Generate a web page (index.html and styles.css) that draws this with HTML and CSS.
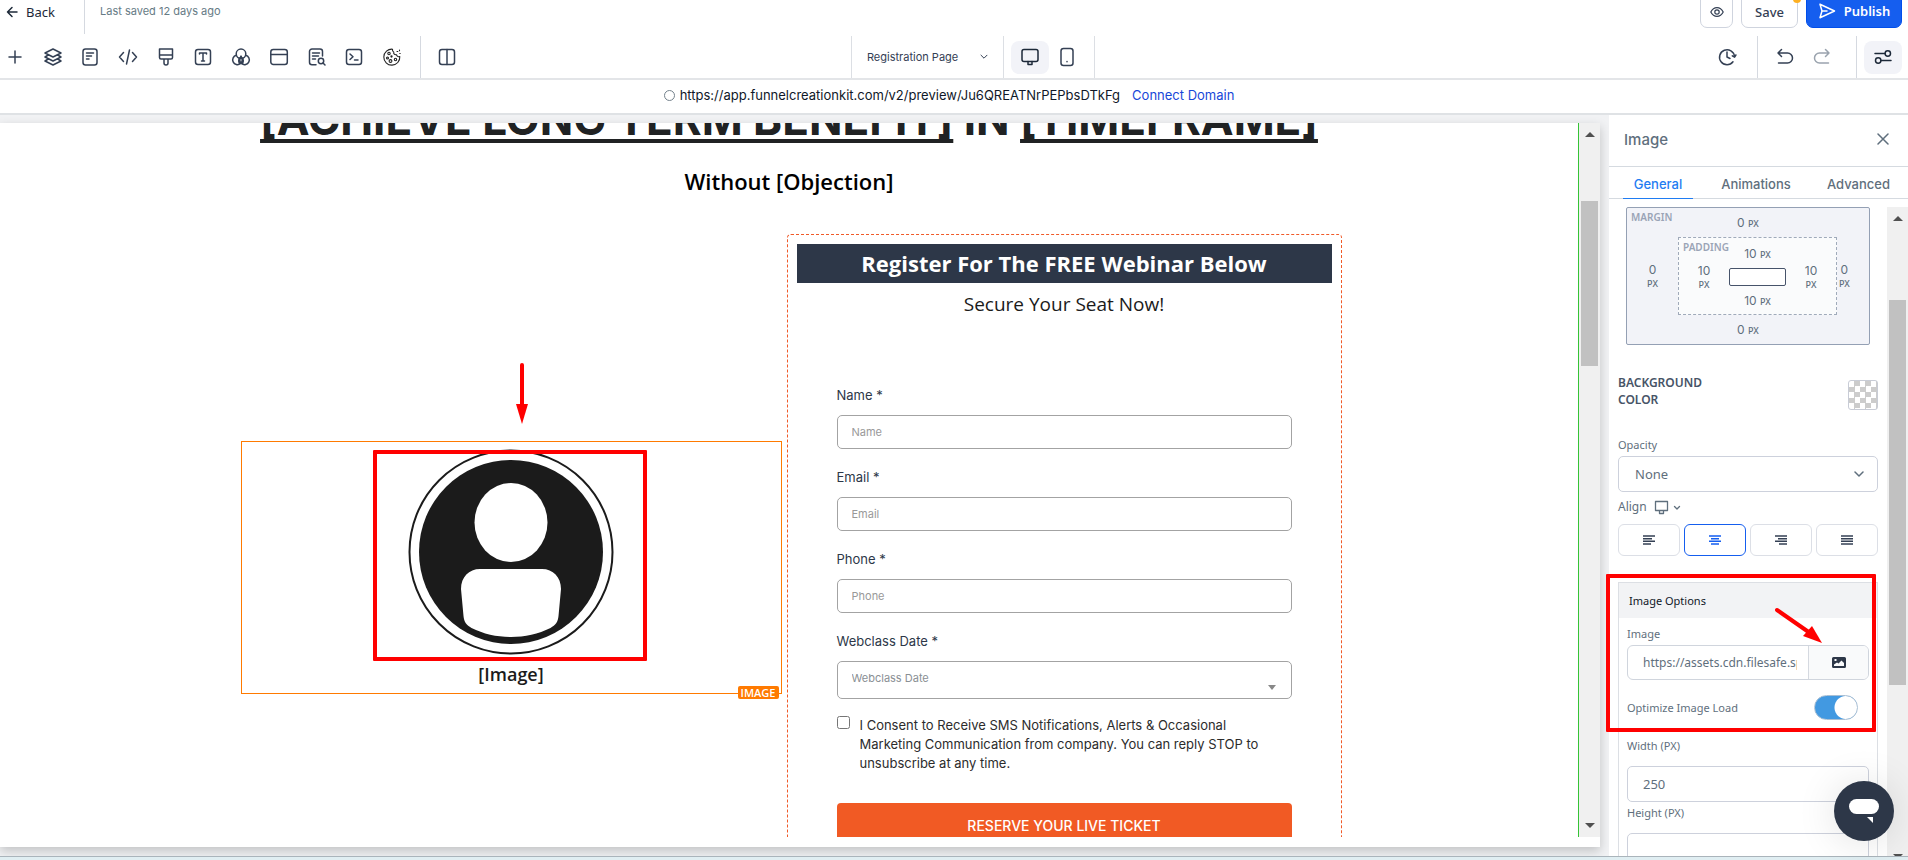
FILE: index.html
```html
<!DOCTYPE html>
<html lang="en">
<head>
<meta charset="utf-8">
<title>Page Builder</title>
<link rel="stylesheet" href="styles.css">
</head>
<body>
<header class="topbar">
  <a class="back" href="#"><svg width="12" height="12" viewBox="0 0 12 12"><path d="M11 6H1.5M6 1.5 1.5 6 6 10.5"/></svg>Back</a>
  <span class="saved">Last saved 12 days ago</span>
  <div class="top-actions">
    <button class="btn eye" aria-label="Preview"><svg width="14" height="14" viewBox="0 0 14 14"><path d="M.8 7C2.200 4.200 4.400 2.600 7 2.600S11.800 4.200 13.200 7C11.800 9.800 9.600 11.400 7 11.400S2.200 9.800.8 7Z"/><circle cx="7" cy="7" r="2.200"/></svg></button>
    <button class="btn save">Save<i class="dot"></i></button>
    <button class="btn publish"><svg width="18" height="18" viewBox="0 0 18 18"><path d="M2 2.200 16.500 9 2 15.800 4 9ZM4 9h5"/></svg>Publish</button>
  </div>
</header>

<nav class="toolbar">
  <div class="left">
  <div class="tools">
    <button class="tool" aria-label="Add"><svg viewBox="0 0 20 20"><path d="M10 4v12M4 10h12"/></svg></button>
    <button class="tool" aria-label="Layers"><svg viewBox="0 0 20 20"><path d="M10 2 18 6l-8 4-8-4ZM4.500 8.500 2 10l8 4 8-4-2.500-1.500M4.500 12.500 2 14l8 4 8-4-2.500-1.500"/></svg></button>
    <button class="tool" aria-label="Pages"><svg viewBox="0 0 20 20"><rect x="3" y="2" width="14" height="16" rx="2.500"/><path d="M6.500 6h7M6.500 9h5M6.500 12h2.500"/></svg></button>
    <button class="tool" aria-label="Code"><svg viewBox="0 0 20 20"><path d="M5.500 5.500 1.500 10l4 4.500M14.500 5.500l4 4.500-4 4.500M11.500 3l-3 14"/></svg></button>
    <button class="tool" aria-label="Styles"><svg viewBox="0 0 20 20"><path d="M3.500 2h13v8.500a1.500 1.500 0 0 1-1.500 1.500H5a1.500 1.500 0 0 1-1.500-1.500ZM3.500 8h13M8 12v4a2 2 0 0 0 4 0v-4"/></svg></button>
    <button class="tool" aria-label="Typography"><svg viewBox="0 0 20 20"><rect x="2.500" y="2.500" width="15" height="15" rx="2.500"/><path d="M6.500 7V6h7v1M10 6v8M8.500 14h3"/></svg></button>
    <button class="tool" aria-label="Colors"><svg viewBox="0 0 20 20"><circle cx="10" cy="6.800" r="4.800"/><path d="M9.700 9.300A4.800 4.800 0 1 1 5.300 8.200M14.700 8.200a4.800 4.800 0 1 1-4.400 1.100M8.800 17a4.800 4.800 0 0 1 1.200-7.200 4.800 4.800 0 0 1 1.200 7.200"/></svg></button>
    <button class="tool" aria-label="Popup"><svg viewBox="0 0 20 20"><rect x="1.800" y="2.500" width="16.500" height="15" rx="2.500"/><path d="M2 7.500h16"/></svg></button>
    <button class="tool" aria-label="SEO"><svg viewBox="0 0 20 20"><path d="M9 17.800H5A2.500 2.500 0 0 1 2.500 15.300V4.500A2.500 2.500 0 0 1 5 2h8a2.500 2.500 0 0 1 2.500 2.500V9M5.500 6h7M5.500 9h6M5.500 12h3"/><circle cx="14" cy="14" r="2.700"/><path d="m16 16 2 2"/></svg></button>
    <button class="tool" aria-label="Tracking"><svg viewBox="0 0 20 20"><rect x="2.500" y="2.500" width="15" height="15" rx="2.500"/><path d="m6 7 3 2.800L6 12.500M10.500 13H14"/></svg></button>
    <button class="tool cookie" aria-label="Cookies"><svg viewBox="0 0 20 20"><path d="M10.500 2.200a8 8 0 1 0 7.300 7.300c-1.800.6-3-.3-3.300-1.800-2 .3-3.200-.8-2.700-2.500-1-.5-1.500-1.500-1.300-3Z"/><circle cx="7" cy="6.500" r="1.200"/><circle cx="5.500" cy="11" r="1"/><circle cx="8.500" cy="14" r="1.400"/><circle cx="13.500" cy="12.500" r="1.200"/><circle cx="9.500" cy="9.500" r=".6"/><path d="M15 4.500h.8M17.500 3v.8M17.800 6.500h.4"/></svg></button>
  </div>
  <div class="split"><button class="tool" aria-label="Columns"><svg viewBox="0 0 20 20"><rect x="2.500" y="2.500" width="15" height="15" rx="2.500"/><path d="M10 2.500v15"/></svg></button></div>
  </div>
  <button class="page-pick">Registration Page <svg width="8" height="6" viewBox="0 0 8 6"><path d="m1 1.200 3 3 3-3"/></svg></button>
  <div class="devices">
    <button class="chip" aria-label="Desktop"><svg width="20" height="20" viewBox="0 0 20 20"><rect x="2" y="2.500" width="16" height="12" rx="2"/><path d="M8 14.500v3h4v-3"/></svg></button>
    <button class="tool" aria-label="Mobile"><svg viewBox="0 0 20 20"><rect x="4" y="1.500" width="12" height="17" rx="2.500"/><path d="M10 14.500v.3"/></svg></button>
  </div>
  <div class="hist">
    <button class="tool" aria-label="History"><svg viewBox="0 0 20 20"><path d="M16 14.800A7.500 7.500 0 1 1 17.500 9.500M15.300 8.800l2.300 1.400 1.300-2.200M10 5v5l3 1.500"/></svg></button>
  </div>
  <div class="undo">
    <button class="tool" aria-label="Undo"><svg viewBox="0 0 20 20"><path d="M6.500 2.500 3 6l3.500 3.500M3 6h9.500a4.500 4.500 0 0 1 0 10H3.500"/></svg></button>
    <button class="tool off" aria-label="Redo"><svg viewBox="0 0 20 20"><path d="M13.500 2.500 17 6l-3.500 3.500M17 6H7.500a4.500 4.500 0 0 0 0 10h9"/></svg></button>
  </div>
  <div class="prefs"><button class="chip" aria-label="Settings"><svg width="20" height="20" viewBox="0 0 20 20"><path d="M2 6.500h10M8 13.500h10"/><circle cx="14.800" cy="6.500" r="2.700"/><circle cx="5.200" cy="13.500" r="2.700"/></svg></button></div>
</nav>

<div class="urlbar"><span class="ring"></span><span>https://app.funnelcreationkit.com/v2/preview/Ju6QREATNrPEPbsDTkFg</span><a href="#">Connect Domain</a></div>

<div class="work">
  <section class="stage">
    <main class="canvas">
      <div class="view">
        <h1><u>[ACHIEVE LONG TERM BENEFIT]</u> IN <u>[TIMEFRAME]</u></h1>
        <h2>Without [Objection]</h2>
        <div class="row">
          <figure class="picture">
            <svg class="avatar" width="206" height="206" viewBox="0 0 206 206">
              <circle cx="103" cy="103" r="101.500" fill="#fff" stroke="#1b1b1b" stroke-width="2"/>
              <circle cx="103" cy="103" r="92" fill="#1b1b1b"/>
              <ellipse cx="103" cy="73.500" rx="36.500" ry="39.500" fill="#fff"/>
              <path d="M72 120h62c11 0 19 8 19 20l-2.500 27c-.5 6-3 9-8 12-24 12-55 12-79 0-5-3-7.500-6-8-12L53 140c0-12 8-20 19-20Z" fill="#fff"/>
            </svg>
            <figcaption>[Image]</figcaption>
            <span class="tag">IMAGE</span>
            <span class="mark mark-picture"></span>
            <svg class="arrow-down" width="12" height="62" viewBox="0 0 12 62"><path d="M6 2v42" stroke="#f00" stroke-width="4" stroke-linecap="round"/><path d="M0 41h12L6 61Z" fill="#f00"/></svg>
          </figure>
          <form class="optin">
            <h3>Register For The FREE Webinar Below</h3>
            <p class="sub">Secure Your Seat Now!</p>
            <div class="fields">
              <label for="f-name">Name *</label><input id="f-name" type="text" placeholder="Name">
              <label for="f-email">Email *</label><input id="f-email" type="email" placeholder="Email">
              <label for="f-phone">Phone *</label><input id="f-phone" type="tel" placeholder="Phone">
              <label for="f-date">Webclass Date *</label>
              <div class="pick"><select id="f-date"><option>Webclass Date</option></select><svg width="8" height="5" viewBox="0 0 8 5"><path d="M0 0h8L4 5Z"/></svg></div>
              <div class="consent"><input id="f-ok" type="checkbox"><label for="f-ok">I Consent to Receive SMS Notifications, Alerts &amp; Occasional Marketing Communication from company. You can reply STOP to unsubscribe at any time.</label></div>
              <button class="reserve" type="button">RESERVE YOUR LIVE TICKET</button>
            </div>
          </form>
        </div>
      </div>
      <div class="scroll"><svg width="10" height="5" viewBox="0 0 10 5"><path d="M0 5h10L5 0Z"/></svg><i class="thumb"></i><svg class="end" width="10" height="5" viewBox="0 0 10 5"><path d="M0 0h10L5 5Z"/></svg></div>
    </main>
  </section>

  <aside class="panel">
    <div class="panel-head"><h4>Image</h4><button aria-label="Close"><svg width="12" height="12" viewBox="0 0 12 12"><path d="m1 1 10 10M11 1 1 11"/></svg></button></div>
    <div class="tabs"><button class="on">General</button><button>Animations</button><button>Advanced</button></div>
    <div class="panel-body">
      <div class="props">
        <div class="margin-box">
          <b class="corner">MARGIN</b>
          <span class="val top">0 <small>PX</small></span>
          <span class="val side">0<small>PX</small></span>
          <div class="padding-box">
            <b class="corner">PADDING</b>
            <span class="val top">10 <small>PX</small></span>
            <span class="val side">10<small>PX</small></span>
            <i class="core"></i>
            <span class="val side">10<small>PX</small></span>
            <span class="val bottom">10 <small>PX</small></span>
          </div>
          <span class="val side near">0<small>PX</small></span>
          <span class="val bottom">0 <small>PX</small></span>
        </div>
        <div class="bg-row"><span>BACKGROUND<br>COLOR</span><button class="swatch" aria-label="Background color"></button></div>
        <label class="lab" for="p-op">Opacity</label>
        <div class="pick-op"><select id="p-op"><option>None</option></select><svg width="10" height="6" viewBox="0 0 10 6"><path d="m1 1 4 4 4-4"/></svg></div>
        <div class="align-label">Align <svg width="28" height="15" viewBox="0 0 28 15"><path d="M1.500 1.500h12v9h-12ZM5.500 11v2.500h4V11M20.500 6.500l2.500 2.500 2.500-2.500"/></svg></div>
        <div class="aligns">
          <button aria-label="Left"><svg width="12" height="10" viewBox="0 0 12 10"><path d="M0 1h12M0 3.700h9M0 6.300h12M0 9h8"/></svg></button>
          <button class="on" aria-label="Center"><svg width="12" height="10" viewBox="0 0 12 10"><path d="M0 1h12M2 3.700h8M0 6.300h12M2 9h8"/></svg></button>
          <button aria-label="Right"><svg width="12" height="10" viewBox="0 0 12 10"><path d="M0 1h12M3 3.700h9M0 6.300h12M4 9h8"/></svg></button>
          <button aria-label="Justify"><svg width="12" height="10" viewBox="0 0 12 10"><path d="M0 1h12M0 3.700h12M0 6.300h12M0 9h12"/></svg></button>
        </div>
        <div class="card">
          <h5>Image Options</h5>
          <div class="card-body">
            <label for="p-url">Image</label>
            <div class="url-field"><input id="p-url" type="text" value="https://assets.cdn.filesafe.space/image.png"><button aria-label="Choose image"><svg width="14" height="11" viewBox="0 0 14 11"><path fill-rule="evenodd" d="M1.500 0h11A1.500 1.500 0 0 1 14 1.500v8a1.500 1.500 0 0 1-1.500 1.500h-11A1.500 1.500 0 0 1 0 9.500v-8A1.500 1.500 0 0 1 1.500 0ZM2.500 2v2h2V2ZM2 9h10V6L9.500 3.500 6.500 6.500 5 5.500 2 7.500Z"/></svg></button></div>
            <div class="optimize"><label for="p-opt">Optimize Image Load</label><input id="p-opt" class="switch" type="checkbox" checked></div>
            <label class="lw" for="p-w">Width (PX)</label><input class="num" id="p-w" type="text" value="250">
            <label class="lh" for="p-h">Height (PX)</label><input class="num" id="p-h" type="text">
          </div>
        </div>
      </div>
      <div class="scroll side-scroll"><svg width="10" height="5" viewBox="0 0 10 5"><path d="M0 5h10L5 0Z"/></svg><i class="thumb"></i><svg class="end" width="10" height="2" viewBox="0 0 10 2"><path d="M0 0h10L8 2H2Z"/></svg></div>
    </div>
    <span class="mark mark-options"></span>
    <svg class="arrow-pick" width="50" height="38" viewBox="0 0 50 38"><path d="M3 3 36 26" stroke="#f00" stroke-width="4" stroke-linecap="round"/><path d="m29 29 9-10 10 17Z" fill="#f00"/></svg>
    <button class="chat" aria-label="Chat"><svg width="32" height="26" viewBox="0 0 32 26"><rect x="1" y="1" width="30" height="15" rx="7.500"/><path d="M19 19h6v6Z"/></svg></button>
  </aside>
</div>
<footer class="strip"></footer>
</body>
</html>
```
FILE: styles.css
```css
* { box-sizing: border-box; }
body { margin: 0; height: 100vh; overflow: hidden; display: flex; flex-direction: column; background: #fff; font-family: Inter, "Liberation Sans", sans-serif; font-size: 13px; color: #344054; }
button, input, select { font: inherit; color: inherit; margin: 0; }
button { padding: 0; border: 0; background: none; }
h1, h2, h3, h4, h5, p, figure { margin: 0; }
svg { display: block; flex: none; fill: none; stroke: currentColor; stroke-width: 1.5; stroke-linecap: round; stroke-linejoin: round; }
a { text-decoration: none; color: inherit; }

.topbar { height: 36px; flex: none; display: flex; align-items: flex-start; overflow: hidden; }
.back { width: 85px; height: 34px; padding: 3px 0 0 6px; display: flex; gap: 8px; align-items: flex-start; line-height: 18px; border-right: 1px solid #d5d9e0; color: #1d2939; font-family: "Noto Sans", sans-serif; }
.back svg { margin-top: 3px; }
.saved { padding-left: 15px; line-height: 22px; font-size: 11px; color: #667b85; }
.top-actions { margin: -8px 6px 0 auto; display: flex; gap: 8px; font-family: "Noto Sans", sans-serif; }
.btn { height: 36px; border: 1px solid #cfd4de; border-radius: 7px; display: flex; align-items: center; justify-content: center; padding-top: 4px; position: relative; }
.eye { width: 33px; padding-top: 3px; }
.eye svg { stroke-width: 1.2; }
.save { width: 57px; font-weight: 500; font-size: 13px; }
.dot { position: absolute; right: -4px; top: 2px; width: 8px; height: 8px; border-radius: 50%; background: #fdb022; }
.publish { width: 96px; gap: 8px; padding-top: 2px; background: #155eef; border-color: #004eeb; color: #fff; font-weight: 600; }

.toolbar { height: 44px; flex: none; display: flex; border-bottom: 2px solid #e3e5e8; }
.toolbar > * { display: flex; align-items: center; }
.toolbar > .left { width: 44.6%; align-items: stretch; }
.tools { width: 402px; padding-left: 5px; display: flex; align-items: center; justify-content: space-between; }
.tool { width: 20px; height: 20px; color: #344054; }
.tool svg { width: 20px; height: 20px; }
.cookie svg { stroke-width: 1.1; color: #222; }
.split { display: flex; align-items: center; margin-left: 18px; padding-left: 16px; border-left: 1px solid #d5d9e0; }
.page-pick { width: 152px; padding: 0 15px 0 15px; justify-content: space-between; border-left: 1px solid #dcdfe4; font-size: 11px; }
.page-pick svg { stroke-width: 1; }
.devices { width: 92px; padding-left: 7px; gap: 8px; border: solid #dcdfe4; border-width: 0 1px; }
.chip { width: 38px; height: 33px; border-radius: 8px; background: #f2f3f8; display: flex; align-items: center; justify-content: center; color: #1d2939; }
.hist { margin-left: auto; padding-right: 20px; }
.undo { width: 99px; padding-left: 17px; gap: 17px; border-left: 1px solid #d5d9e0; }
.off { color: #9aa3ae; }
.prefs { padding: 0 6px 0 7px; border-left: 1px solid #d5d9e0; }

.urlbar { height: 33px; flex: none; display: flex; align-items: center; justify-content: center; gap: 12px; padding: 0 10px 3px 0; color: #101828; }
.ring { width: 11px; height: 11px; border: 1px solid #74828c; border-radius: 50%; margin-right: -7px; }
.urlbar a { color: #1747d8; }

.work { flex: 1; min-height: 0; display: flex; border-top: 2px solid #dfe2e5; }
.stage { flex: 1; min-width: 0; padding: 8px 9px 9px 0; background: #f1f2f4; overflow: hidden; }
.canvas { height: 100%; display: flex; background: #fff; padding-bottom: 10px; box-shadow: 0 4px 10px #0003; }
.view { flex: 1; min-width: 0; overflow: hidden; border-right: 1px solid #35c435; }
.view h1 { margin-top: -31px; text-align: center; font-size: 44px; line-height: 54px; font-weight: 700; color: #202223; white-space: nowrap; }
.view u { text-decoration-thickness: 4px; text-underline-offset: 4px; }
.view h2 { margin-top: 18px; text-align: center; font: 600 22px/34px "Open Sans", sans-serif; color: #000; }
.row { margin: 36px auto 0; max-width: 1105px; padding-left: 4px; display: grid; grid-template-columns: 541fr 555fr; gap: 5px; align-items: center; }
.picture { position: relative; border: 1px solid #ff7a00; height: 253px; padding-top: 7px; display: flex; flex-direction: column; align-items: center; }
.picture figcaption { font: 600 18px/38px "Open Sans", sans-serif; color: #1b1b1b; }
.avatar { stroke: none; }
.tag { position: absolute; right: 2px; bottom: -6px; padding: 0 3px; border-radius: 2px; background: #ff7a00; color: #fff; font: 600 11px/13px "Open Sans", sans-serif; }
.mark { position: absolute; border: 4px solid #f00; border-radius: 1px; }
.mark-picture { left: 131px; top: 8px; width: 274px; height: 211px; }
.arrow-down, .arrow-pick { position: absolute; stroke: none; }
.arrow-down { left: 274px; top: -79px; }

.optin { border: 1px dashed #f05a28; border-radius: 4px; padding: 9px 9px 47px; }
.optin h3 { background: #2d3748; color: #fff; text-align: center; font: 700 22px/39px "Open Sans", sans-serif; }
.sub { text-align: center; font: 400 19px/42px "Open Sans", sans-serif; color: #1b1b1b; }
.fields { margin: 60px 40px 0; display: flex; flex-direction: column; color: #2d3748; }
.fields > label { line-height: 20px; margin-bottom: 10px; }
.fields > input, .fields select { width: 100%; border: 1px solid #a3a3a3; border-radius: 5px; padding: 0 14px; font-size: 11px; background: #fff; }
.fields > input { height: 34px; margin-bottom: 18px; }
.fields input::placeholder { color: #999; opacity: 1; }
.pick, .pick-op { position: relative; }
.pick select { height: 38px; appearance: none; color: #8a8f94; padding: 0 14px 4px; }
.pick svg { position: absolute; right: 16px; bottom: 9px; fill: #888; stroke: none; }
.consent { margin-top: 16px; display: flex; gap: 10px; align-items: flex-start; color: #2c2c2c; line-height: 19px; }
.consent input { width: 13px; height: 13px; flex: none; margin-top: 1px; }
.consent label { padding: 1px 20px 0 0; }
.reserve { margin-top: 30px; height: 50px; padding-bottom: 6px; border-radius: 4px; background: #f15a24; color: #fff; font-size: 14px; font-weight: 500; }

.scroll { width: 21px; flex: none; background: #f0f0f0; display: flex; flex-direction: column; align-items: center; padding: 9px 0; }
.scroll svg { fill: #505050; stroke: none; }
.thumb { width: 17px; height: 165px; flex: none; margin-top: 64px; background: #c1c1c1; }
.end { margin-top: auto; }

.panel { position: relative; width: 299px; flex: none; display: flex; flex-direction: column; background: #fff; color: #5f6f7d; }
.panel-head { height: 52px; flex: none; padding: 0 19px 2px 15px; display: flex; align-items: center; justify-content: space-between; border-bottom: 1px solid #d5dae0; }
.panel-head h4 { font-size: 15px; font-weight: 500; }
.panel-head button { padding-bottom: 2px; }
.tabs { height: 32px; flex: none; display: flex; justify-content: space-between; padding: 0 10px 0 14px; border-bottom: 1px solid #d5dae0; }
.tabs button { padding: 3px 8px 0; font-weight: 500; height: 32px; border-bottom: 1px solid transparent; }
.tabs .on { width: 70px; color: #1f7cf2; border-color: #1f7cf2; }
.panel-body { flex: 1; min-height: 0; display: flex; padding-top: 8px; font-family: "Noto Sans", sans-serif; font-size: 11px; }
.props { flex: 1; min-width: 0; padding: 0 9px; overflow: hidden; }
.margin-box, .padding-box { position: relative; display: grid; text-align: center; font: 12px/15px Inter, sans-serif; }
.margin-box { width: 244px; height: 138px; margin-left: 8px; grid-template: 29px 78px 29px / 51px 1fr 32px; border: 1px solid #94a0b4; border-radius: 2px; background: #f2f3f8; }
.padding-box { grid-template: 30px 18px 28px / 50px 1fr 50px; border: 1px dashed #a0aaba; background: #fafbfc; }
.val { align-self: center; }
.val small { font: 500 9px "Noto Sans", sans-serif; }
.top, .bottom { grid-column: 1 / -1; }
.side small { display: block; line-height: 14px; }
.near { justify-self: start; padding-left: 2px; }
.corner { position: absolute; left: 4px; top: 2px; font: 600 10px/15px "Noto Sans", sans-serif; color: #9aa4b6; }
.core { border: 1px solid #46536a; border-radius: 2px; background: #fff; }
.bg-row { margin-top: 29px; display: flex; justify-content: space-between; line-height: 17px; font-size: 12px; font-weight: 600; color: #475467; }
.swatch { width: 30px; height: 30px; margin-top: 6px; border: 1px solid #c8ccd6; border-radius: 3px; background: repeating-conic-gradient(#ccc 0 25%, #fff 0 50%) 0 0 / 11px 11px; }
.lab { display: block; margin-top: 27px; line-height: 16px; }
.pick-op { margin-top: 3px; }
.pick-op select { width: 100%; height: 36px; border: 1px solid #cdd1dc; border-radius: 5px; appearance: none; padding: 0 16px; background: #fff; font-size: 13px; }
.pick-op svg { position: absolute; right: 14px; top: 15px; }
.align-label { display: flex; align-items: center; gap: 7px; line-height: 16px; margin-top: 7px; font-size: 12px; }
.align-label svg { stroke-width: 1.3; }
.aligns { margin-top: 9px; display: grid; grid-template-columns: repeat(4, 1fr); gap: 4px; }
.aligns button { height: 32px; border: 1px solid #dcdfe6; border-radius: 6px; display: flex; align-items: center; justify-content: center; color: #344054; }
.aligns svg { stroke-linecap: butt; }
.aligns .on { border-color: #155eef; color: #155eef; }
.card { margin-top: 26px; border: 1px solid #dcdfe4; }
.card h5 { background: #f2f3f5; font-size: 11px; font-weight: 400; line-height: 35px; padding-left: 10px; color: #101828; }
.card-body { padding: 8px 8px 0; display: flex; flex-direction: column; line-height: 16px; }
.url-field { margin-top: 3px; height: 35px; display: flex; border: 1px solid #d0d5dd; border-radius: 6px; overflow: hidden; }
.url-field input { flex: 1; min-width: 0; border: 0; padding: 0; margin: 0 11px 0 15px; background: none; font-size: 12px; }
.url-field button { width: 60px; border-left: 1px solid #d5d9e0; background: #f9fafb; display: flex; align-items: center; justify-content: center; }
.url-field svg { fill: #2d3748; stroke: none; }
.optimize { margin-top: 15px; padding-right: 11px; display: flex; align-items: center; justify-content: space-between; }
.switch { appearance: none; width: 44px; height: 25px; border-radius: 13px; border: 1px solid #a9bfd4; background: radial-gradient(circle at 31px 50%, #fff 11px, #4299e1 12px); }
.lw { margin-top: 18px; }
.num { height: 36px; width: 100%; border: 1px solid #cdd1dc; border-radius: 5px; padding: 0 15px; font-size: 13px; background: #fff; }
.lw + .num { margin-top: 12px; }
.lh { margin-top: 3px; }
.lh + .num { margin-top: 12px; }
.mark-options { left: -3px; top: 459px; width: 270px; height: 158px; }
.arrow-pick { left: 165px; top: 492px; }
.side-scroll { padding-bottom: 0; }
.side-scroll .thumb { height: 385px; margin-top: 79px; }
.chat { position: absolute; right: 14px; bottom: 15px; width: 60px; height: 60px; border-radius: 50%; background: #2d3748; box-shadow: 0 2px 40px #0000001f; display: flex; align-items: center; justify-content: center; }
.chat svg { fill: #fff; stroke: none; }
.strip { height: 4px; flex: none; border-top: 1px solid #aab4bb; background: #e0eef2; }
```
